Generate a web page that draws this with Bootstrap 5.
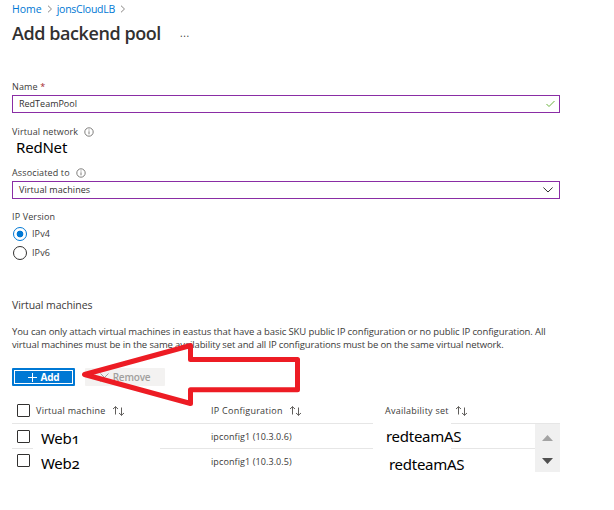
<!DOCTYPE html>
<html lang="en">
<head>
<meta charset="utf-8">
<title>Add backend pool</title>
<link href="https://cdn.jsdelivr.net/npm/bootstrap@5.3.0/dist/css/bootstrap.min.css" rel="stylesheet">
<style>
body{font-family:"Open Sans","Noto Sans",sans-serif;font-size:9px;line-height:12px;color:#3b3a39;background:#fff;overflow:hidden}
svg{flex:none;display:block}
.pane{width:548px;margin-left:12px;height:510px}
.crumbs{height:18px;font-size:10.5px}
.crumbs a{color:#0078d4}
.crumb-two{letter-spacing:-.25px}
.sep{margin:0 3px 0 4px}
.page-title{height:30px}
.page-title h1{font-size:18px;line-height:30px;font-weight:600;margin:0;width:149px;white-space:nowrap;letter-spacing:-.43px;color:#323130}
.dots{font-size:10px;margin-left:19px;letter-spacing:.6px}
.lbl{height:14px;white-space:nowrap;letter-spacing:.13px}
.lbl-name{margin-top:33px}
.lbl-net,.lbl-ip{margin-top:12px}
.lbl-assoc{margin-top:10px;margin-bottom:1px}
.req{color:#a4262c}
.info{margin-left:6px}
.field{height:18px;border:1px solid #8a2da5;border-radius:0;padding:0 4px 0 6px;color:#323130}
.pull{margin-right:2px;letter-spacing:.08px}
.hand{font-family:"Noto Sans","Open Sans",sans-serif;color:#000;font-size:15px;line-height:18px;white-space:nowrap;font-variant-numeric:oldstyle-nums;letter-spacing:-.2px}
.net{margin-top:-1px;padding-left:4px}
.pick{height:19px;letter-spacing:.1px}
.pick input{appearance:none;width:14px;height:14px;border:1px solid #323130;border-radius:50%;margin:0 5px 0 1px}
.pick input:checked{border-color:#0078d4;background:radial-gradient(circle,#0078d4 3px,#fff 3.7px)}
.pick-first{margin-top:-1px}
.sect{font-size:10.5px;height:16px;line-height:16px;margin:35px 0 0;letter-spacing:-.07px}
.note{font-size:9.5px;line-height:13px;margin:12px 0 0;white-space:nowrap;letter-spacing:-.1px}
.note-end{letter-spacing:-.135px}
.tools{margin-top:17px}
.tool{height:18px;border-radius:1px;font-size:10px;line-height:12px;padding:0;border:0}
.tool-add{width:63px;background:#0078d4;color:#fff;font-weight:700;outline:1px solid #fff;outline-offset:-3px;letter-spacing:-.2px}
.tool-remove,.tool-remove:disabled{width:80px;background:#f3f2f1;color:#a19f9d;font-weight:600;opacity:1;margin-left:10px;letter-spacing:-.2px}
.heads{height:37px;padding-top:12px;letter-spacing:.26px}
.sort{margin-left:6px}
.c1{width:199px;padding-left:5px}
.c2{width:174px}
.head-name{margin-left:6px}
.box{appearance:none;width:13px;height:13px;border:1px solid #323130;border-radius:1px;margin:0;flex:none}
.rule{height:1px}
.rule i{height:1px;background:#e6e6e6}
.rule-head{width:361px}
.rule-a{width:21px}
.rule-b{width:213px;margin-left:127px}
.rule-c{margin-left:78px;flex:1}
.vm-row{height:24px}
.vm-row .box{margin-top:6px}
.vm-row .hand{letter-spacing:-.28px}
.vm-row .vm-name{margin:5px 0 0 11px}
.vm-row .c2{padding-top:7px;letter-spacing:.1px}
.vm-row .set{padding:3px 0 0 1px}
.vm-last{height:23px}
.vm-last .box{margin-top:5px}
.vm-last .set{padding:6px 0 0 4px}
.scroller{width:25px;height:48px;background:#f0f0f0}
.callout{position:absolute;left:0;top:0;pointer-events:none}
</style>
</head>
<body>
<main class="pane d-flex flex-column">
  <nav class="crumbs d-flex align-items-center">
    <a href="#" class="text-decoration-none">Home</a>
    <svg class="sep" width="8" height="8" fill="none" stroke="#8a8886"><path d="M2 .7 5.5 4 2 7.3"/></svg>
    <a href="#" class="text-decoration-none crumb-two">jonsCloudLB</a>
    <svg class="sep" width="8" height="8" fill="none" stroke="#8a8886"><path d="M2 .7 5.5 4 2 7.3"/></svg>
  </nav>
  <header class="page-title d-flex align-items-center"><h1>Add backend pool</h1><span class="dots">...</span></header>
  <div class="lbl lbl-name">Name <span class="req">*</span></div>
  <div class="field d-flex align-items-center justify-content-between"><span>RedTeamPool</span>
    <svg width="9" height="8" fill="none" stroke="#6bb33c"><path d="M.5 4 3 6.5 8.5 1"/></svg></div>
  <div class="lbl lbl-net d-flex align-items-center"><span>Virtual network</span>
    <svg class="info" width="10" height="10" fill="none" stroke="#605e5c" stroke-width=".8"><circle cx="5" cy="5" r="4.2"/><path d="M5 4.3v3M5 2.5v1"/></svg></div>
  <div class="hand net">RedNet</div>
  <div class="lbl lbl-assoc d-flex align-items-center"><span>Associated to</span>
    <svg class="info" width="10" height="10" fill="none" stroke="#605e5c" stroke-width=".8"><circle cx="5" cy="5" r="4.2"/><path d="M5 4.3v3M5 2.5v1"/></svg></div>
  <div class="field d-flex align-items-center justify-content-between"><span class="pull">Virtual machines</span>
    <svg class="pull" width="10" height="8" fill="none" stroke="#323130"><path d="M.4 1.5 5 6 9.6 1.5"/></svg></div>
  <div class="lbl lbl-ip">IP Version</div>
  <label class="pick pick-first d-flex align-items-center"><input type="radio" name="ip" checked>IPv4</label>
  <label class="pick d-flex align-items-center"><input type="radio" name="ip">IPv6</label>
  <h2 class="sect">Virtual machines</h2>
  <p class="note">You can only attach virtual machines in eastus that have a basic SKU public IP configuration or no public IP configuration. All<br><span class="note-end">virtual machines must be in the same availability set and all IP configurations must be on the same virtual network.</span></p>
  <div class="tools d-flex">
    <button class="btn tool tool-add d-flex align-items-center justify-content-center"><svg class="me-1" width="9" height="9" stroke="#fff"><path d="M4.5 0v9M0 4.5h9"/></svg>Add</button>
    <button class="btn tool tool-remove d-flex align-items-center justify-content-center" disabled><svg class="me-1" width="9" height="9" stroke="#a19f9d"><path d="M.5.5l8 8M8.5.5l-8 8"/></svg>Remove</button>
  </div>
  <div class="heads d-flex align-items-center">
    <div class="c1 d-flex align-items-center"><input type="checkbox" class="box"><span class="head-name">Virtual machine</span><svg class="sort" width="13" height="10" fill="none" stroke="#605e5c"><path d="M3.5 8.5v-8M1 3 3.5.7 6 3M9.500 1.500v8M7 7 9.500 9.300 12 7"/></svg></div>
    <div class="c2 d-flex align-items-center"><span>IP Configuration</span><svg class="sort" width="13" height="10" fill="none" stroke="#605e5c"><path d="M3.5 8.5v-8M1 3 3.5.7 6 3M9.500 1.500v8M7 7 9.500 9.300 12 7"/></svg></div>
    <div class="d-flex align-items-center"><span>Availability set</span><svg class="sort" width="13" height="10" fill="none" stroke="#605e5c"><path d="M3.5 8.5v-8M1 3 3.5.7 6 3M9.500 1.500v8M7 7 9.500 9.300 12 7"/></svg></div>
  </div>
  <div class="rule d-flex"><i class="rule-head"></i><i class="rule-c"></i></div>
  <div class="d-flex">
    <div class="flex-grow-1">
      <div class="vm-row d-flex">
        <div class="c1 d-flex"><input type="checkbox" class="box"><span class="hand vm-name">Web1</span></div>
        <div class="c2">ipconfig1 (10.3.0.6)</div>
        <div class="hand set">redteamAS</div>
      </div>
      <div class="rule d-flex"><i class="rule-a"></i><i class="rule-b"></i><i class="rule-c"></i></div>
      <div class="vm-row vm-last d-flex">
        <div class="c1 d-flex"><input type="checkbox" class="box"><span class="hand vm-name">Web2</span></div>
        <div class="c2">ipconfig1 (10.3.0.5)</div>
        <div class="hand set">redteamAS</div>
      </div>
    </div>
    <div class="scroller"><svg width="25" height="48"><path d="M7 17h11L12.500 11z" fill="#a3a3a3"/><path d="M7 34h11L12.500 40z" fill="#505050"/></svg></div>
  </div>
</main>
<svg class="callout" width="614" height="510" fill="none" stroke="#ed1c24" stroke-width="5"><path d="M84.500 374.500 190.500 345.500V359.500H297.500V389.700H190.500V403.500L84.500 374.500z" stroke-linejoin="round"/></svg>
<script src="https://cdn.jsdelivr.net/npm/bootstrap@5.3.0/dist/js/bootstrap.bundle.min.js"></script>
</body>
</html>
